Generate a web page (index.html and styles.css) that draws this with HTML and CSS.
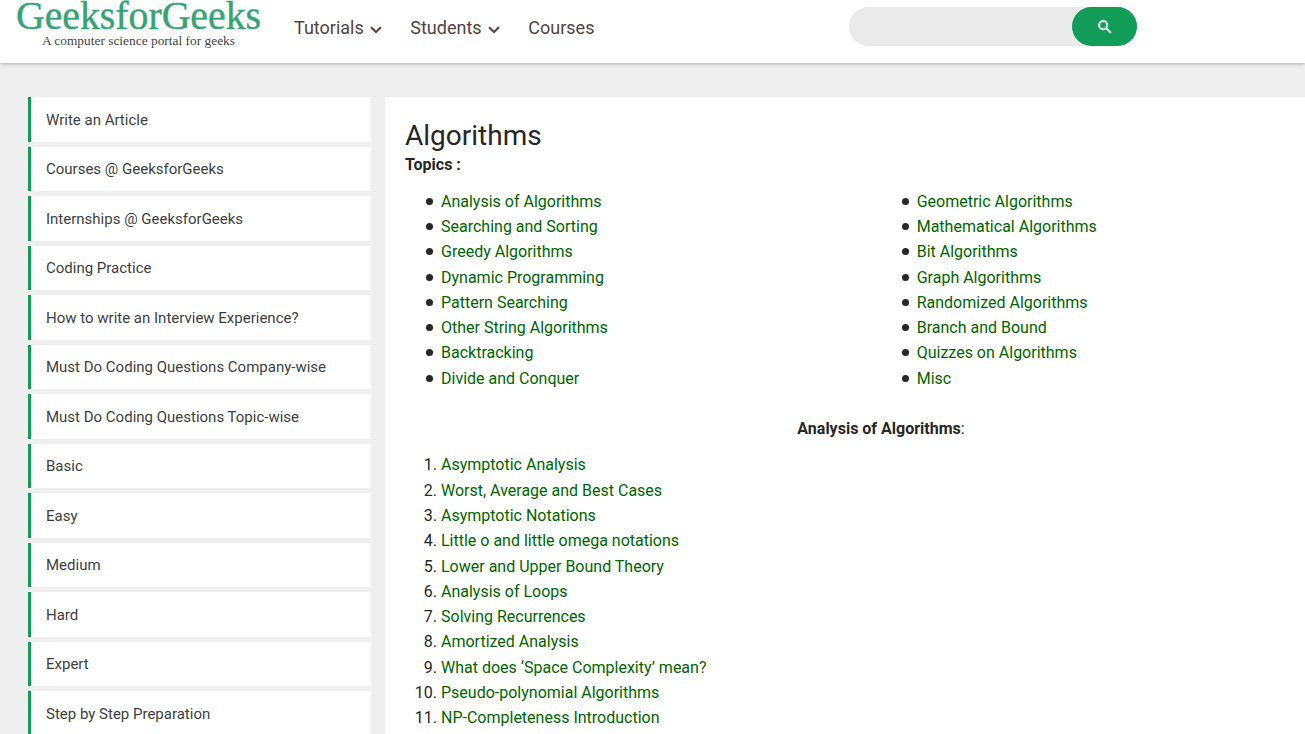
FILE: index.html
```html
<!DOCTYPE html>
<html lang="en">
<head>
<meta charset="utf-8">
<title>Algorithms - GeeksforGeeks</title>
<link rel="stylesheet" href="styles.css">
</head>
<body>
<header class="header">
  <a class="logo" aria-label="GeeksforGeeks">
    <svg width="250" height="50" viewBox="0 0 250 50">
      <text class="logo-name" x="1" y="29.3" textLength="245" lengthAdjust="spacingAndGlyphs">GeeksforGeeks</text>
      <text class="logo-tag" x="27" y="44.6" textLength="193" lengthAdjust="spacingAndGlyphs">A computer science portal for geeks</text>
    </svg>
  </a>
  <nav class="nav">
    <a class="nav-tutorials">Tutorials<svg class="chevron" width="12" height="8" viewBox="0 0 12 8"><path d="M1 1.2 6 6 11 1.2"/></svg></a>
    <a class="nav-students">Students<svg class="chevron" width="12" height="8" viewBox="0 0 12 8"><path d="M1 1.2 6 6 11 1.2"/></svg></a>
    <a>Courses</a>
  </nav>
  <div class="search">
    <button class="search-button" aria-label="Search"><svg width="18" height="18" viewBox="0 0 24 24"><path d="M15.5 14h-.79l-.28-.27A6.47 6.47 0 0 0 16 9.5 6.5 6.5 0 1 0 9.5 16c1.61 0 3.09-.59 4.23-1.57l.27.28v.79l5 4.99L20.49 19l-4.99-5zm-6 0a4.5 4.5 0 1 1 0-9 4.5 4.5 0 0 1 0 9z"/></svg></button>
  </div>
</header>
<div class="page">
  <aside class="sidebar">
    <a>Write an Article</a>
    <a>Courses @ GeeksforGeeks</a>
    <a>Internships @ GeeksforGeeks</a>
    <a>Coding Practice</a>
    <a>How to write an Interview Experience?</a>
    <a>Must Do Coding Questions Company-wise</a>
    <a>Must Do Coding Questions Topic-wise</a>
    <a>Basic</a>
    <a>Easy</a>
    <a>Medium</a>
    <a>Hard</a>
    <a>Expert</a>
    <a>Step by Step Preparation</a>
  </aside>
  <main class="content">
    <h1>Algorithms</h1>
    <p class="topics-label">Topics :</p>
    <div class="topics">
      <ul>
        <li><a>Analysis of Algorithms</a></li>
        <li><a>Searching and Sorting</a></li>
        <li><a>Greedy Algorithms</a></li>
        <li><a>Dynamic Programming</a></li>
        <li><a>Pattern Searching</a></li>
        <li><a>Other String Algorithms</a></li>
        <li><a>Backtracking</a></li>
        <li><a>Divide and Conquer</a></li>
      </ul>
      <ul>
        <li><a>Geometric Algorithms</a></li>
        <li><a>Mathematical Algorithms</a></li>
        <li><a>Bit Algorithms</a></li>
        <li><a>Graph Algorithms</a></li>
        <li><a>Randomized Algorithms</a></li>
        <li><a>Branch and Bound</a></li>
        <li><a>Quizzes on Algorithms</a></li>
        <li><a>Misc</a></li>
      </ul>
    </div>
    <p class="section-title"><b>Analysis of Algorithms</b>:</p>
    <ol>
      <li><a>Asymptotic Analysis</a></li>
      <li><a>Worst, Average and Best Cases</a></li>
      <li><a>Asymptotic Notations</a></li>
      <li><a>Little o and little omega notations</a></li>
      <li><a>Lower and Upper Bound Theory</a></li>
      <li><a>Analysis of Loops</a></li>
      <li><a>Solving Recurrences</a></li>
      <li><a>Amortized Analysis</a></li>
      <li><a>What does ‘Space Complexity’ mean?</a></li>
      <li><a>Pseudo-polynomial Algorithms</a></li>
      <li><a>NP-Completeness Introduction</a></li>
    </ol>
  </main>
</div>
</body>
</html>
```
FILE: styles.css
```css
* { box-sizing: border-box; }
html, body { height: 100%; }
body {
  margin: 0;
  overflow: hidden;
  display: flex;
  flex-direction: column;
  background: #efefef;
  color: #272727;
  font-family: Roboto, "Liberation Sans", sans-serif;
  font-size: 16px;
}
.header {
  flex: none;
  display: flex;
  height: 63px;
  padding-left: 15px;
  background: #fff;
  box-shadow: 0 1px 4px rgba(0, 0, 0, .26);
}
.logo { width: 279px; }
.logo svg { display: block; }
.logo-name {
  font: 39px "Liberation Serif", serif;
  fill: #35a474;
  stroke: #35a474;
  stroke-width: .4px;
}
.logo-tag {
  font: 13px "Liberation Serif", serif;
  fill: #444;
}
.nav {
  display: flex;
  width: 555px;
  height: 55px;
  align-items: center;
  font-size: 18px;
  color: #54433f;
}
.nav-tutorials { width: 116.3px; }
.nav-students { width: 118px; }
.chevron { margin-left: 6px; vertical-align: 0; }
.chevron path { fill: none; stroke: #54433f; stroke-width: 2; }
.search {
  display: flex;
  justify-content: flex-end;
  width: 288px;
  height: 39px;
  margin-top: 7px;
  border-radius: 20px;
  background: #eaeaea;
}
.search-button {
  display: flex;
  align-items: center;
  justify-content: center;
  width: 65px;
  padding: 0;
  border: 0;
  border-radius: 20px;
  background: #119d57;
}
.search-button path { fill: #fff; stroke: #fff; stroke-width: .6; }
.page {
  flex: 1;
  min-height: 0;
  display: flex;
  gap: 14px;
  padding: 34px 0 0 28px;
}
.sidebar {
  flex: none;
  width: 343px;
  display: flex;
  flex-direction: column;
  gap: 5px;
}
.sidebar a {
  flex: none;
  height: 44.5px;
  padding: .6px 0 0 15px;
  border-left: 3px solid #119d57;
  background: #fff;
  color: #403f3f;
  font-size: 15px;
  line-height: 45px;
}
.content {
  flex: none;
  width: 992px;
  padding: 22px 20px 0;
  background: #fff;
  line-height: 25.285px;
}
h1 {
  margin: 0;
  font-size: 28px;
  font-weight: 400;
  line-height: 33px;
}
.topics-label { margin: 0; font-weight: 700; }
.topics { display: grid; grid-template-columns: 475.7px 1fr; margin-top: 11.48px; }
ul, ol { margin: 0; padding-left: 36px; }
ul { list-style: none; }
ul li::before {
  content: "";
  display: inline-block;
  width: 7px;
  height: 7px;
  margin: 0 8px 0 -15px;
  border-radius: 50%;
  background: #272727;
  vertical-align: 2px;
}
.section-title { margin: 25px 0 11.18px; text-align: center; }
.content a { color: #006600; }
```
